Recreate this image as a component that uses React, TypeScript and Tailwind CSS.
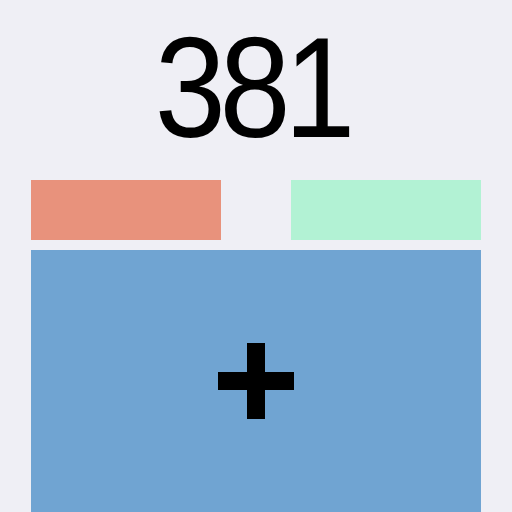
import React from "react";

const App = () => {
  return (
    <div className="w-[512px] h-[512px] overflow-hidden bg-[#efeff5] flex flex-col px-[31px]">
      <div className="h-[180px] shrink-0 flex items-start justify-center pt-[17px]">
        <span
          className="text-[142px] leading-none font-normal tracking-[-7px] scale-x-[0.9] text-black -translate-x-[4px]"
          style={{ fontFamily: "'Liberation Sans', Arial, sans-serif" }}
        >
          381
        </span>
      </div>
      <div className="flex justify-between shrink-0">
        <div className="w-[190px] h-[60px] bg-[#e8927c]" />
        <div className="w-[190px] h-[60px] bg-[#b2f2d4]" />
      </div>
      <div className="mt-[10px] h-[300px] shrink-0 bg-[#70a4d2] flex items-start justify-center pt-[93px]">
        <div className="relative w-[76px] h-[76px]">
          <div className="absolute left-[29px] top-0 w-[18px] h-[76px] bg-black" />
          <div className="absolute left-0 top-[29px] w-[76px] h-[18px] bg-black" />
        </div>
      </div>
    </div>
  );
};

export default App;
